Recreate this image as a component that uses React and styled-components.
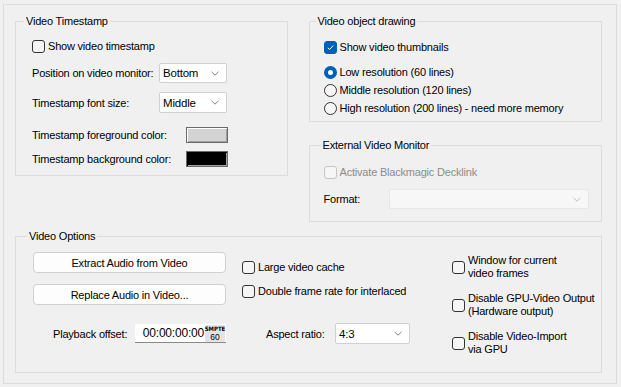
import styled, { createGlobalStyle } from "styled-components";

const GlobalStyle = createGlobalStyle`
  html, body {
    margin: 0;
    padding: 0;
    background: #f0f0f0;
  }
  body {
    font-family: "Liberation Sans", Arial, sans-serif;
    font-size: 11px;
    letter-spacing: -0.2px;
    color: #000;
  }
`;

const Window = styled.div`
  width: 621px;
  height: 387px;
  box-sizing: border-box;
  padding: 4px 4px 3px 3px;
`;

const Frame = styled.div`
  box-sizing: border-box;
  height: 100%;
  border: 1px solid #dcdcdc;
  padding: 9px 14px 0 11px;
`;

const TopRow = styled.div`
  display: flex;
  gap: 21px;
  align-items: flex-start;
  margin-bottom: 7px;
`;

const RightColumn = styled.div`
  display: flex;
  flex-direction: column;
  gap: 16px;
  width: 294px;
`;

const Group = styled.fieldset`
  margin: 0;
  min-width: 0;
  box-sizing: border-box;
  border: 1px solid #dcdcdc;
  padding: 0;
  width: ${(p) => p.$width || "auto"};
`;

const Legend = styled.legend`
  padding: 0 2px;
  margin-left: ${(p) => p.$indent}px;
  line-height: 14px;
`;

const Body = styled.div`
  box-sizing: border-box;
  height: ${(p) => p.$h}px;
  padding: ${(p) => p.$pad};
`;

const Stack = styled.div`
  display: flex;
  flex-direction: column;
  gap: ${(p) => p.$gap || 0}px;
  margin-top: ${(p) => p.$mt || 0}px;
`;

const Row = styled.div`
  display: flex;
  align-items: center;
  height: ${(p) => p.$h || 14}px;
  margin-top: ${(p) => p.$mt || 0}px;
  color: ${(p) => (p.$disabled ? "#8c8c8c" : "#000")};
`;

const Label = styled.span`
  box-sizing: border-box;
  width: ${(p) => p.$w}px;
  padding-left: ${(p) => p.$indent || 0}px;
  flex: none;
  white-space: nowrap;
`;

const Box = styled.span`
  width: 13px;
  height: 13px;
  box-sizing: border-box;
  flex: none;
  margin-right: 3px;
  border-radius: 3px;
  border: 1px solid ${(p) => (p.$checked ? "#005fb8" : p.$disabled ? "#c4c4c4" : "#333")};
  background: ${(p) => (p.$checked ? "#005fb8" : "#f6f6f6")};
  display: flex;
  align-items: center;
  justify-content: center;
`;

const Radio = styled.span`
  width: 13px;
  height: 13px;
  box-sizing: border-box;
  flex: none;
  margin-right: 3px;
  border-radius: 50%;
  border: ${(p) => (p.$checked ? "4px solid #005fb8" : "1px solid #333")};
  background: ${(p) => (p.$checked ? "#fff" : "#f6f6f6")};
`;

const Check = ({ checked, disabled, children }) => (
  <>
    <Box $checked={checked} $disabled={disabled}>
      {checked && (
        <svg width="9" height="9" viewBox="0 0 9 9">
          <path d="M1.8 4.8 L3.6 6.5 L7.2 2.6" fill="none" stroke="#fff" strokeWidth="1" />
        </svg>
      )}
    </Box>
    <span>{children}</span>
  </>
);

const Combo = styled.div`
  box-sizing: border-box;
  width: ${(p) => p.$w}px;
  height: ${(p) => p.$h || 20}px;
  border: 1px solid ${(p) => (p.$disabled ? "#e6e6e6" : "#d0d0d0")};
  background: ${(p) => (p.$disabled ? "#f7f7f7" : "#fff")};
  border-radius: 2px;
  display: flex;
  align-items: center;
  justify-content: space-between;
  padding: 0 7px 0 3px;
  font-size: 11.5px;
`;

const Chevron = ({ color = "#707070" }) => (
  <svg width="8" height="5" viewBox="0 0 8 5">
    <path d="M0.5 0.8 L4 4.2 L7.5 0.8" fill="none" stroke={color} strokeWidth="0.9" />
  </svg>
);

const Swatch = styled.div`
  box-sizing: border-box;
  width: 42px;
  height: 16px;
  border: 1px solid #6a6a6a;
  background: ${(p) => p.$color};
  box-shadow: inset 1px 1px 0 ${(p) => (p.$color === "#000" ? "#000" : "#fff")},
    inset -1px -1px 0 #a0a0a0;
`;

const OptionsGrid = styled.div`
  display: grid;
  grid-template-columns: 193px 194px auto;
  column-gap: 16px;
  align-items: start;
`;

const Button = styled.div`
  box-sizing: border-box;
  height: 21px;
  margin-top: ${(p) => p.$mt || 0}px;
  border: 1px solid #d0d0d0;
  border-radius: 4px;
  background: #fdfdfd;
  display: flex;
  align-items: center;
  justify-content: center;
`;

const TimeBox = styled.div`
  box-sizing: border-box;
  width: 91px;
  height: 19px;
  background: #fff;
  border-bottom: 1px solid #8a8a8a;
  display: flex;
  align-items: center;
  justify-content: flex-end;
  padding-right: 1px;
  font-size: 12px;
`;

const Smpte = styled.div`
  margin-left: 1px;
  width: 20px;
  height: 17px;
  background: #e3e3e3;
  display: flex;
  flex-direction: column;
  align-items: center;
  justify-content: center;
  line-height: 8px;
  letter-spacing: 0;
  font-family: "DejaVu Sans Condensed", "DejaVu Sans", sans-serif;
  font-weight: bold;
  font-size: 6px;
  & b {
    font-size: 8.5px;
    font-weight: normal;
    font-family: "Liberation Sans", sans-serif;
  }
`;

const MultiLine = styled.div`
  display: flex;
  align-items: center;
  line-height: 13px;
  margin-top: ${(p) => p.$mt || 0}px;
`;

export default function App() {
  return (
    <Window>
      <GlobalStyle />
      <Frame>
        <TopRow>
          <Group $width="273px">
            <Legend $indent={8}>Video Timestamp</Legend>
            <Body $h={147} $pad="11px 0 0 16px">
              <Row>
                <Check>Show video timestamp</Check>
              </Row>
              <Row $h={20} $mt={10}>
                <Label $w={127}>Position on video monitor:</Label>
                <Combo $w={68}>
                  Bottom
                  <Chevron />
                </Combo>
              </Row>
              <Row $h={21} $mt={9}>
                <Label $w={127}>Timestamp font size:</Label>
                <Combo $w={68} $h={21}>
                  Middle
                  <Chevron />
                </Combo>
              </Row>
              <Row $h={16} $mt={14}>
                <Label $w={154}>Timestamp foreground color:</Label>
                <Swatch $color="#d3d3d3" />
              </Row>
              <Row $h={16} $mt={8}>
                <Label $w={154}>Timestamp background color:</Label>
                <Swatch $color="#000" />
              </Row>
            </Body>
          </Group>

          <RightColumn>
            <Group>
              <Legend $indent={6}>Video object drawing</Legend>
              <Body $h={93} $pad="12px 0 0 14px">
                <Row>
                  <Check checked>Show video thumbnails</Check>
                </Row>
                <Stack $gap={4} $mt={11}>
                  <Row>
                    <Radio $checked />
                    Low resolution (60 lines)
                  </Row>
                  <Row>
                    <Radio />
                    Middle resolution (120 lines)
                  </Row>
                  <Row>
                    <Radio />
                    High resolution (200 lines) - need more memory
                  </Row>
                </Stack>
              </Body>
            </Group>

            <Group>
              <Legend $indent={11}>External Video Monitor</Legend>
              <Body $h={69} $pad="13px 0 0 14px">
                <Row $disabled>
                  <Check disabled>Activate Blackmagic Decklink</Check>
                </Row>
                <Row $h={20} $mt={10}>
                  <Label $w={65}>Format:</Label>
                  <Combo $w={200} $disabled>
                    <span />
                    <Chevron color="#b8b8b8" />
                  </Combo>
                </Row>
              </Body>
            </Group>
          </RightColumn>
        </TopRow>

        <Group>
          <Legend $indent={11}>Video Options</Legend>
          <Body $h={129} $pad="9px 0 0 17px">
            <OptionsGrid>
              <Stack>
                <Button>Extract Audio from Video</Button>
                <Button $mt={11}>Replace Audio in Video...</Button>
                <Row $h={19} $mt={19}>
                  <Label $w={102} $indent={20}>
                    Playback offset:
                  </Label>
                  <TimeBox>
                    00:00:00:00
                    <Smpte>
                      SMPTE
                      <b>60</b>
                    </Smpte>
                  </TimeBox>
                </Row>
              </Stack>

              <Stack>
                <Row $mt={8}>
                  <Check>Large video cache</Check>
                </Row>
                <Row $mt={10}>
                  <Check>Double frame rate for interlaced</Check>
                </Row>
                <Row $h={21} $mt={25}>
                  <Label $w={93} $indent={24}>
                    Aspect ratio:
                  </Label>
                  <Combo $w={75} $h={21}>
                    4:3
                    <Chevron />
                  </Combo>
                </Row>
              </Stack>

              <Stack $gap={12}>
                <MultiLine $mt={2}>
                  <Box />
                  <span>
                    Window for current
                    <br />
                    video frames
                  </span>
                </MultiLine>
                <MultiLine>
                  <Box />
                  <span>
                    Disable GPU-Video Output
                    <br />
                    (Hardware output)
                  </span>
                </MultiLine>
                <MultiLine>
                  <Box />
                  <span>
                    Disable Video-Import
                    <br />
                    via GPU
                  </span>
                </MultiLine>
              </Stack>
            </OptionsGrid>
          </Body>
        </Group>
      </Frame>
    </Window>
  );
}
